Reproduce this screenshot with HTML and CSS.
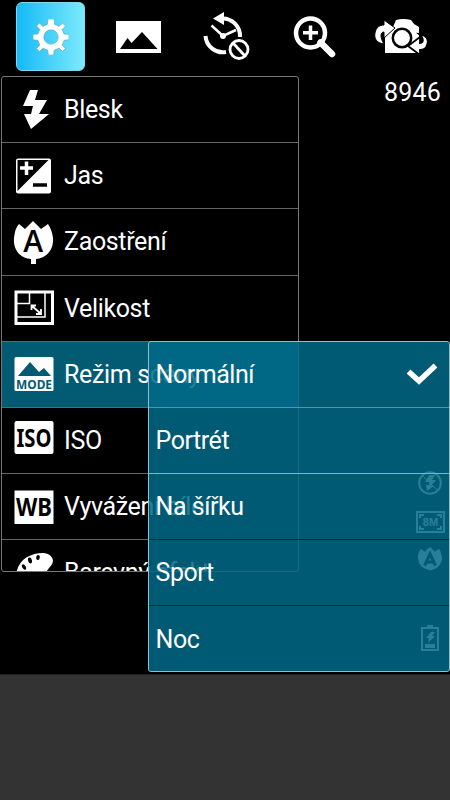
FILE: index.html
```html
<!DOCTYPE html>
<html lang="cs">
<head>
<meta charset="utf-8">
<title>Fotoaparát</title>
<link rel="stylesheet" href="styles.css">
</head>
<body>
<div class="camera">
  <header class="toolbar">
    <button class="tool active"><svg width="36" height="36" viewBox="-18 -18 36 36"><g fill="#fff" stroke="#56a5b8" stroke-width=".6"><path fill-rule="evenodd" d="M-3-18H3L3.6-12.5Q6-12 8-10.5L11.5-14 14.5-11 11-7.5Q12.300-5.500 13-3L18-2.700V2.700L13 3.300Q12.300 6 11 8L14.500 11.500 11.500 14.500 8 11Q6 12.300 3.300 13L2.700 18H-2.700L-3.300 13Q-6 12.300-8 11L-11.500 14.500-14.500 11.500-11 8Q-12.300 6-13 3.300L-18 2.700V-2.700L-13-3Q-12.300-5.500-11-7.500L-14.500-11-11.500-14-8-10.500Q-6-12-3.600-12.500ZM7.200 0A7.200 7.200 0 1 0-7.200 0A7.200 7.200 0 1 0 7.200 0Z"/></g></svg></button>
    <button class="tool"><svg width="46" height="32" viewBox="0 0 46 32"><path fill="#fff" d="M0 0H45V32H0Z"/><path d="M4 28L11.500 17 15.500 22 26 11 41.500 28Z"/></svg></button>
    <button class="tool"><svg width="48" height="50" viewBox="0 0 48 50"><path d="M19 6.500A17.500 17.500 0 0 1 38 25M3.500 24A17.500 17.500 0 0 0 24 40" fill="none" stroke="#fff" stroke-width="4"/><path fill="#fff" d="M11 6.500L22 0V13Z"/><path d="M9.500 13.500L21 24 34 18" fill="none" stroke="#fff" stroke-width="2.500"/><circle cx="21" cy="24" r="3" fill="#fff"/><circle cx="37" cy="37.500" r="11" fill="#000"/><circle cx="37" cy="37.500" r="9" fill="none" stroke="#fff" stroke-width="2.800"/><path d="M31 31L43 44" stroke="#fff" stroke-width="2.800"/></svg></button>
    <button class="tool"><svg width="44" height="44" viewBox="-1 0 44 44"><circle cx="17.500" cy="18" r="14.500" fill="none" stroke="#fff" stroke-width="4.500"/><path d="M17.500 10.500V25M10 17.700H25" stroke="#fff" stroke-width="3.500"/><path d="M27.500 27.500L39 39" stroke="#fff" stroke-width="6.500" stroke-linecap="round"/></svg></button>
    <button class="tool"><svg width="54" height="38" viewBox="0 0 54 38"><path fill="#fff" d="M11 16L19 9 22 2Q29 0 37 2L40 6 45 9V35H11Z"/><circle cx="28" cy="20" r="9.200" fill="#fff" stroke="#000" stroke-width="2.500"/><path d="M10 26C2 25 0 20 1 15 2 9 6 7 10 7V2L21 10 10 20V14C6 14 6 20 10 26Z" fill="#fff" stroke="#000" stroke-width="1"/><path d="M45 16C53 17 55 22 53 27 52 31 49 32 46 32V37L34 28 46 19V25C50 25 50 20 45 16Z" fill="#fff" stroke="#000" stroke-width="1.800"/></svg></button>
  </header>
  <div class="counter">8946</div>
  <aside class="status">
    <svg class="s-flash" width="26" height="26" viewBox="0 0 26 26"><circle cx="13" cy="13" r="10.800" fill="none" stroke="#fff" stroke-width="2"/><path fill="#fff" d="M12 5H18L15 10H19L14 16H17L10 21 9 15H12L13 12H8Z"/><path d="M5 5L21 21" stroke="#fff" stroke-width="1"/></svg>
    <svg class="s-size" width="29" height="22" viewBox="0 0 29 22"><path d="M1 1H28V21H1Z" fill="none" stroke="#fff" stroke-width="2"/><path d="M4 7V4H8M21 4H25V7M4 15V18H8M21 18H25V15" fill="none" stroke="#fff" stroke-width="2"/><text class="tiny" x="14.500" y="15" text-anchor="middle">8M</text></svg>
    <svg class="s-focus" width="24" height="24" viewBox="0 0 40 40"><path fill="#fff" d="M0 15Q1 8 5 3L11 8 20 0 28 8 35 3Q39 8 40 17C40 29 33 36 20 39 7 36 0 29 0 15Z"/><path d="M11 31L20 11 29 31M14 25H26" fill="none" stroke="#000" stroke-width="5"/></svg>
    <svg class="s-battery" width="20" height="28" viewBox="0 0 20 28"><path d="M2 4H18V26H2ZM7 2H13" fill="none" stroke="#fff" stroke-width="2"/><path fill="#fff" d="M11 8H15L12 12H15L8 19 9 14H6ZM5 20H15V24H5Z"/></svg>
  </aside>
  <nav class="menu">
    <div class="row"><span class="icon"><svg width="42" height="42" viewBox="0 0 42 42"><path fill="#fff" d="M18 1H26L23 11H35L27 25H37L19 40 12 25H19L21 17H11Z"/></svg></span>Blesk</div>
    <div class="row"><span class="icon"><svg width="42" height="42" viewBox="0 0 42 42"><rect x="4" y="3.500" width="35" height="35" rx="2" fill="#fff"/><path d="M5.500 36V5H36.500Z"/><path d="M8 13H21M14.500 6.500V20" stroke="#fff" stroke-width="3.500"/><path d="M21 30H35" stroke="#000" stroke-width="3.500"/></svg></span>Jas</div>
    <div class="row"><span class="icon"><svg width="42" height="44" viewBox="0 0 42 44"><path fill="#fff" d="M2 18Q3 8 7 4L13 9 21 1 29 9 36 4Q40 10 41 18C42 30 34 38 24 39V44H19V39C8 38 1 30 2 18Z"/><text class="glyph-a" x="21.200" y="32" text-anchor="middle">A</text></svg></span>Zaostření</div>
    <div class="row"><span class="icon"><svg width="42" height="42" viewBox="0 0 42 42"><rect x="4" y="5" width="36.500" height="31.500" fill="none" stroke="#fff" stroke-width="3"/><path d="M4 16.500H17.500V6M4 30H33V6" fill="none" stroke="#fff" stroke-width="1.500"/><path d="M20 19L28 26M19.500 23V18.500H24M29 22V27H24" fill="none" stroke="#fff" stroke-width="1.800"/></svg></span>Velikost</div>
    <div class="row selected"><span class="icon"><svg width="42" height="42" viewBox="0 0 42 42"><rect x="2.500" y="4" width="39" height="34" rx="1.500" fill="#fff"/><path class="teal" d="M6 23L18 9 27 19 32 15 39 23Z"/><text class="glyph-mode" x="22" y="35.500" text-anchor="middle" textLength="36" lengthAdjust="spacingAndGlyphs">MODE</text></svg></span>Režim scény</div>
    <div class="row"><span class="icon"><svg width="42" height="42" viewBox="0 0 42 42"><rect x="2.500" y="1" width="39" height="33" rx="2" fill="#fff"/><text class="glyph-iso" x="22" y="26.500" text-anchor="middle" textLength="35" lengthAdjust="spacingAndGlyphs">ISO</text></svg></span>ISO</div>
    <div class="row"><span class="icon"><svg width="42" height="42" viewBox="0 0 42 42"><path d="M2.500 4.500H41.500V38H2.500Z" fill="#fff"/><text class="glyph-wb" x="22" y="29.500" text-anchor="middle" textLength="36" lengthAdjust="spacingAndGlyphs">WB</text></svg></span>Vyvážení bílé</div>
    <div class="row"><span class="icon"><svg width="42" height="42" viewBox="0 0 42 42"><path fill="#fff" d="M4 24C5 8 18 1 31 1 37 1 41 5 41 9 40 15 34 17 33 24 32 35 5 36 4 24Z"/><ellipse cx="12" cy="15" rx="1.700" ry="3" transform="rotate(-30 12 15)"/><ellipse cx="18" cy="8.500" rx="1.900" ry="3" transform="rotate(-15 18 8.500)"/><ellipse cx="26" cy="5.500" rx="1.800" ry="2.500" transform="rotate(10 26 5.500)"/></svg></span>Barevný efekt</div>
  </nav>
  <nav class="submenu">
    <div class="option mixed">Normální<svg width="32" height="24" viewBox="0 0 32 24"><path d="M2.500 8.500L13 18 29.500 2.500" fill="none" stroke="#fff" stroke-width="5.500"/></svg></div>
    <div class="option bright">Portrét</div>
    <div class="option">Na šířku</div>
    <div class="option">Sport</div>
    <div class="option">Noc</div>
  </nav>
</div>
</body>
</html>
```
FILE: styles.css
```css
* { box-sizing: border-box; }
body {
  margin: 0;
  background: #333;
  color: #fff;
  font-family: Roboto, "Noto Sans", sans-serif;
  font-size: 25px;
}
.camera {
  position: relative;
  height: 675px;
  background: #000;
  border-bottom: 1px solid #222;
}
svg { display: block; flex: none; }

.toolbar {
  display: flex;
  gap: 17.500px;
  height: 74px;
  padding: 2px 0 2px 16px;
}
.tool {
  display: flex;
  flex: none;
  align-items: center;
  justify-content: center;
  width: 70px;
  height: 70px;
  padding: 0;
  border: 0;
  background: none;
}
.tool.active {
  width: 69px;
  height: 69px;
  margin-right: 1px;
  border: 1px solid #7fd9f2;
  border-radius: 6px;
  background: linear-gradient(90deg, #16b9f7, #7beafc);
}
.counter {
  padding: 4px 9px 0 0;
  line-height: 30px;
  text-align: right;
  letter-spacing: .2px;
}

.status {
  position: absolute;
  right: 5px;
  top: 470px;
  width: 30px;
  display: flex;
  flex-direction: column;
  align-items: center;
}
.s-size { margin-top: 15px; }
.s-focus { margin-top: 14px; }
.s-battery { margin-top: 53px; }
.tiny { font: bold 11px "Liberation Sans", sans-serif; letter-spacing: 0; fill: #fff; }

.menu {
  position: absolute;
  left: 1px;
  top: 76px;
  width: 298px;
  height: 496px;
  overflow: hidden;
  border: 1px solid #777;
  border-radius: 3px;
  background: #000;
  letter-spacing: -.35px;
}
.row {
  display: flex;
  align-items: center;
  height: 66.200px;
  border-bottom: 1px solid #666;
  padding-left: 10px;
  white-space: nowrap;
}
.icon { flex: none; width: 52px; }
.row.selected { background: #035a73; }
.teal, .glyph-mode { fill: #035a73; }
.glyph-a { font: 600 30px "Open Sans", sans-serif; letter-spacing: 0; }
.glyph-mode { font: bold 12.500px "Noto Sans", sans-serif; letter-spacing: 0; }
.glyph-iso { font: bold 25px "Noto Sans", sans-serif; letter-spacing: 0; }
.glyph-wb { font: bold 25px "Noto Sans", sans-serif; letter-spacing: 0; }

.submenu {
  position: absolute;
  left: 148px;
  top: 341px;
  width: 302px;
  height: 331px;
  border: 1px solid #94bdc9;
  border-radius: 3px;
  background: rgba(0, 106, 135, .85);
  letter-spacing: -.45px;
}
.option {
  display: flex;
  align-items: center;
  justify-content: space-between;
  height: 66px;
  padding: 0 11px 0 6.500px;
  border-bottom: 1px solid #052a3c;
}
.option.mixed { border-color: #6d8a8c; }
.option.bright { border-color: #a4a5b0; }
.option:last-child { border: 0; }
```
